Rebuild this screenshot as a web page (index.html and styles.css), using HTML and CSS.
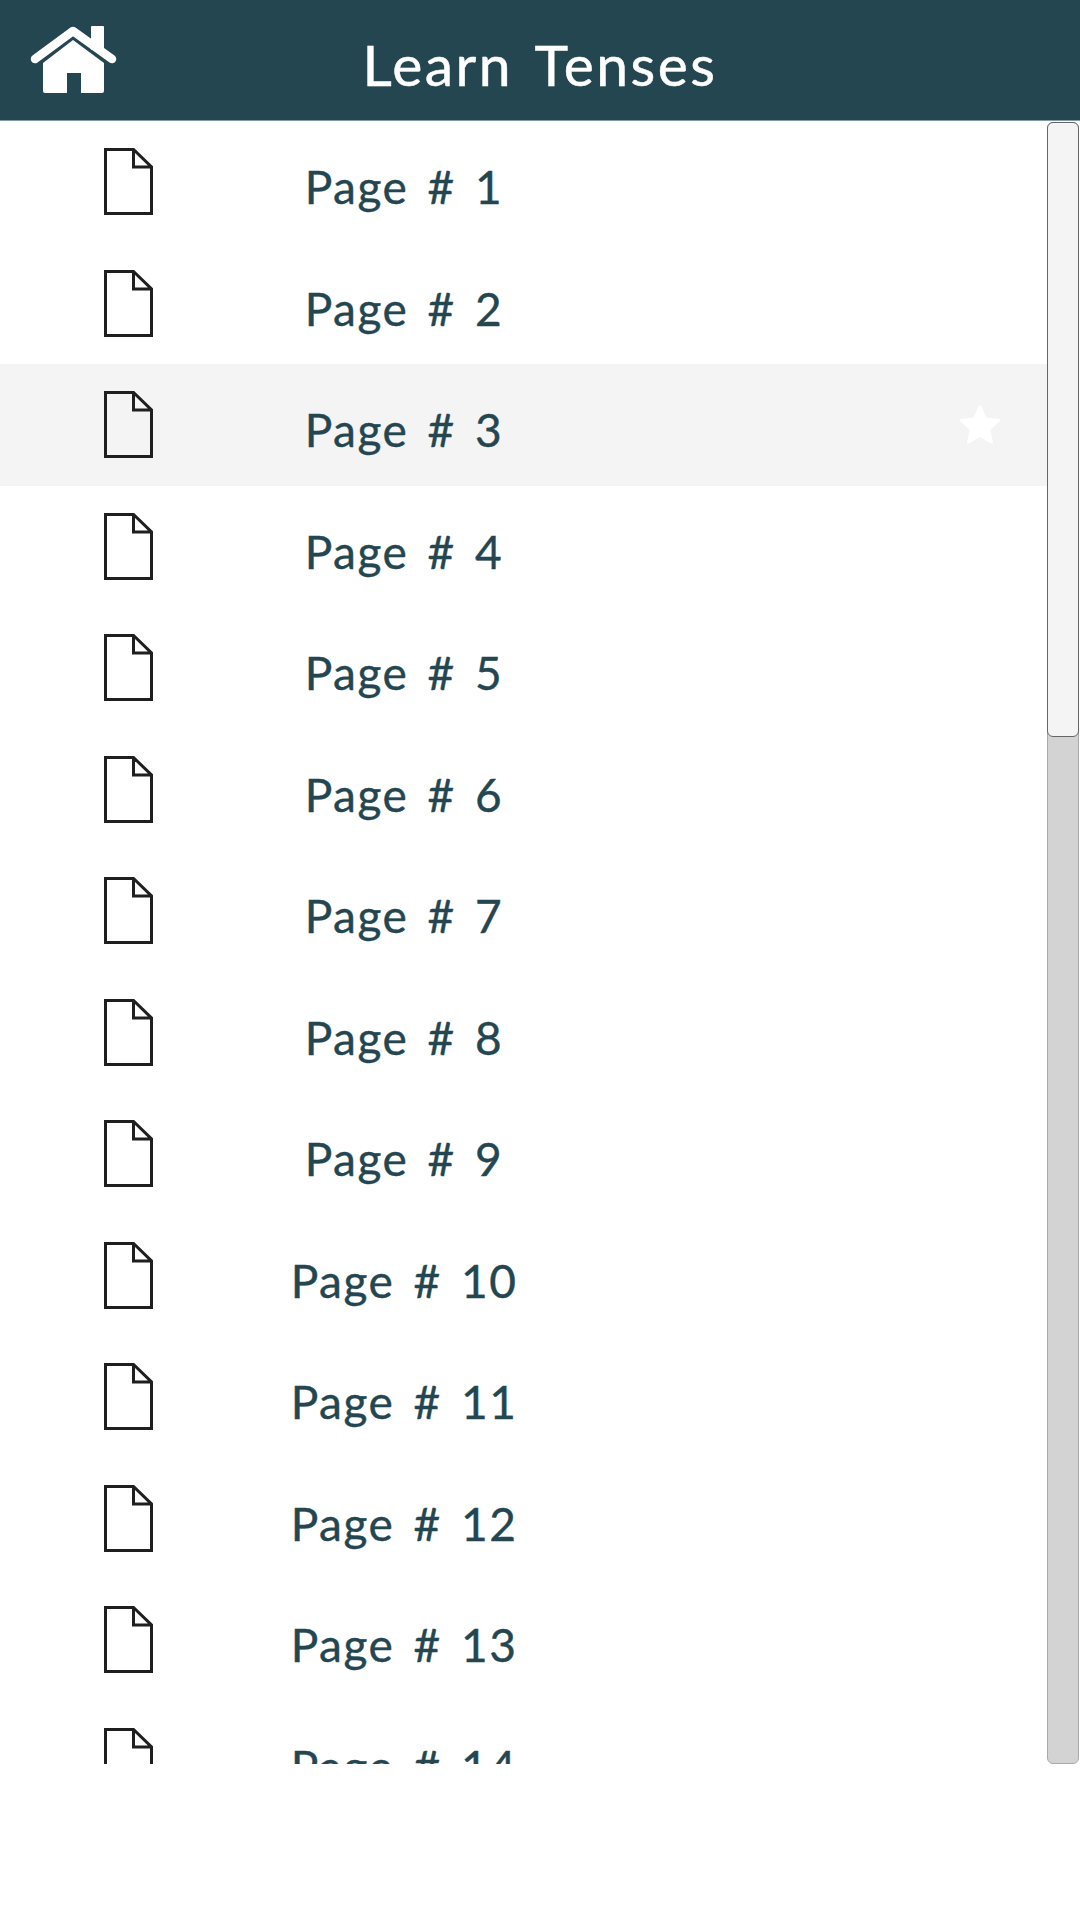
FILE: index.html
```html
<!DOCTYPE html>
<html lang="en">
<head>
    <meta charset="UTF-8">
    <meta name="viewport" content="width=device-width, initial-scale=1.0">
    <title>Learn Tenses</title>
    <link rel="stylesheet" href="styles.css">
</head>
<body>
    <svg class="icon-defs" width="0" height="0">
        <symbol id="doc" viewBox="0 0 50 67">
            <path d="M1.5 1.5H29.5L47.5 19V65.5H1.5Z M29.5 1.5V19H47.5" fill="none" stroke="#1f1f1f" stroke-width="3"/>
        </symbol>
    </svg>

    <header class="topbar">
        <div class="topbar-side">
            <svg class="home-icon" viewBox="0 0 90 72">
                <rect x="62" y="2" width="13" height="24" rx="1" fill="#fff"/>
                <path d="M6 35L44 7L83 35" fill="none" stroke="#fff" stroke-width="8.5" stroke-linecap="round" stroke-linejoin="round"/>
                <path d="M14 39L44 16L75 39V67Q75 69 73 69H52V49H38V69H16Q14 69 14 67Z" fill="#fff"/>
            </svg>
        </div>
        <h1 class="title">Learn Tenses</h1>
        <div class="topbar-side"></div>
    </header>

    <main class="content">
        <ul class="page-list">
            <li class="page-row"><span class="icon-cell"><svg class="doc-icon"><use href="#doc"/></svg></span><span class="page-label">Page # 1</span></li>
            <li class="page-row"><span class="icon-cell"><svg class="doc-icon"><use href="#doc"/></svg></span><span class="page-label">Page # 2</span></li>
            <li class="page-row active"><span class="icon-cell"><svg class="doc-icon"><use href="#doc"/></svg></span><span class="page-label">Page # 3</span>
                <svg class="star" viewBox="0 0 24 24"><path d="M12 1.5l3.2 7 7.6.8-5.7 5.1 1.6 7.5L12 18.1l-6.7 3.8 1.6-7.5L1.2 9.3l7.6-.8z" fill="#fff" stroke="#fff" stroke-width="1.5" stroke-linejoin="round"/></svg>
            </li>
            <li class="page-row"><span class="icon-cell"><svg class="doc-icon"><use href="#doc"/></svg></span><span class="page-label">Page # 4</span></li>
            <li class="page-row"><span class="icon-cell"><svg class="doc-icon"><use href="#doc"/></svg></span><span class="page-label">Page # 5</span></li>
            <li class="page-row"><span class="icon-cell"><svg class="doc-icon"><use href="#doc"/></svg></span><span class="page-label">Page # 6</span></li>
            <li class="page-row"><span class="icon-cell"><svg class="doc-icon"><use href="#doc"/></svg></span><span class="page-label">Page # 7</span></li>
            <li class="page-row"><span class="icon-cell"><svg class="doc-icon"><use href="#doc"/></svg></span><span class="page-label">Page # 8</span></li>
            <li class="page-row"><span class="icon-cell"><svg class="doc-icon"><use href="#doc"/></svg></span><span class="page-label">Page # 9</span></li>
            <li class="page-row"><span class="icon-cell"><svg class="doc-icon"><use href="#doc"/></svg></span><span class="page-label">Page # 10</span></li>
            <li class="page-row"><span class="icon-cell"><svg class="doc-icon"><use href="#doc"/></svg></span><span class="page-label">Page # 11</span></li>
            <li class="page-row"><span class="icon-cell"><svg class="doc-icon"><use href="#doc"/></svg></span><span class="page-label">Page # 12</span></li>
            <li class="page-row"><span class="icon-cell"><svg class="doc-icon"><use href="#doc"/></svg></span><span class="page-label">Page # 13</span></li>
            <li class="page-row"><span class="icon-cell"><svg class="doc-icon"><use href="#doc"/></svg></span><span class="page-label">Page # 14</span></li>
        </ul>
        <div class="scroll-track">
            <div class="scroll-thumb"></div>
        </div>
    </main>
</body>
</html>
```
FILE: styles.css
```css
body {
    margin: 0;
    font-family: "Comic Sans MS", "Lato", "Noto Sans", sans-serif;
    background-color: #fff;
}
.icon-defs {
    position: absolute;
}
.topbar {
    display: grid;
    grid-template-columns: 1fr auto 1fr;
    align-items: center;
    height: 120px;
    background-color: #244650;
    border-bottom: 1px solid #7f9ba3;
}
.topbar-side {
    display: flex;
    padding-left: 29px;
}
.home-icon {
    width: 90px;
    height: 72px;
}
.title {
    margin: 0;
    padding-top: 8px;
    color: #fff;
    font-size: 57px;
    font-weight: 400;
    letter-spacing: 2.5px;
    word-spacing: 6px;
    -webkit-text-stroke: 0.5px #fff;
}
.content {
    display: flex;
    height: 1643px;
    overflow: hidden;
}
.page-list {
    flex: 1;
    margin: 0;
    padding: 0;
    list-style: none;
}
.page-row {
    display: flex;
    align-items: center;
    height: 121.5px;
    color: #244650;
}
.page-row.active {
    background-color: #f4f4f4;
}
.icon-cell {
    display: flex;
    width: 104px;
    padding-left: 104px;
}
.doc-icon {
    width: 50px;
    height: 67px;
}
.page-label {
    width: 392px;
    padding-top: 10px;
    text-align: center;
    font-size: 46px;
    letter-spacing: 1.5px;
    word-spacing: 6px;
    -webkit-text-stroke: 0.4px #244650;
}
.star {
    width: 42px;
    height: 42px;
    margin-left: auto;
    margin-right: 46px;
}
.scroll-track {
    box-sizing: border-box;
    width: 32px;
    margin: 1px 1px 0 0;
    background-color: #d3d3d3;
    border: 1px solid #a9a9a9;
    border-radius: 6px;
}
.scroll-thumb {
    box-sizing: border-box;
    height: 615px;
    margin: -1px;
    background-color: #f4f4f4;
    border: 1px solid #666;
    border-radius: 6px;
}
```
